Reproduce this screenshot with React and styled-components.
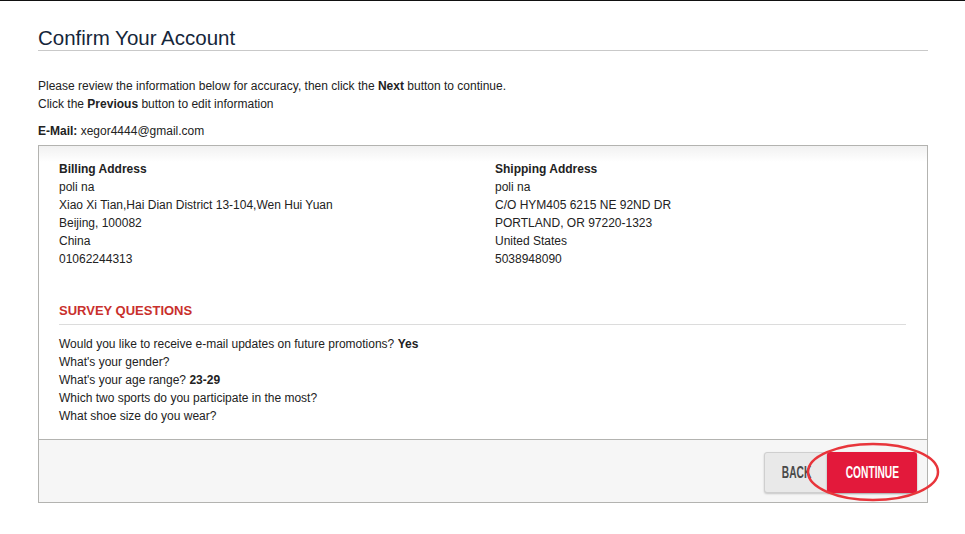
import React from "react";
import styled, { createGlobalStyle } from "styled-components";

const Global = createGlobalStyle`
  html, body { margin: 0; padding: 0; background: #fff; }
  body {
    font-family: "Liberation Sans", Arial, Helvetica, sans-serif;
    font-size: 12px;
    color: #222;
    border-top: 1px solid #111;
  }
`;

const Page = styled.div`
  width: 890px;
  padding: 26px 0 30px 38px;
`;

const Title = styled.h1`
  margin: 0;
  font-size: 20.5px;
  font-weight: normal;
  color: #15263a;
  line-height: 22px;
  padding-bottom: 1px;
  border-bottom: 1px solid #c9c9c9;
`;

const Intro = styled.p`
  margin: 26px 0 0;
  line-height: 18px;
`;

const Email = styled.p`
  margin: 9px 0 0;
  line-height: 18px;
`;

const Box = styled.div`
  margin-top: 5px;
  border: 1px solid #b3b3b0;
`;

const Body = styled.div`
  padding: 14px 20px 14px 20px;
  background: linear-gradient(#f1f1f1 0, #fff 16px);
`;

const Addresses = styled.div`
  display: grid;
  grid-template-columns: 436px 1fr;
  line-height: 18px;
`;

const Address = styled.div`
  display: flex;
  flex-direction: column;
`;

const Survey = styled.div`
  margin-top: 34px;
`;

const SurveyHead = styled.h2`
  margin: 0;
  font-size: 13px;
  line-height: 18px;
  font-weight: bold;
  color: #c9302c;
  padding-bottom: 4px;
  border-bottom: 1px solid #dcdcdc;
  margin-right: 1px;
`;

const Questions = styled.div`
  margin-top: 10px;
  line-height: 18px;
  display: flex;
  flex-direction: column;
`;

const Footer = styled.div`
  border-top: 1px solid #b3b3b0;
  background: #f6f6f6;
  height: 63px;
  display: flex;
  justify-content: flex-end;
  align-items: flex-start;
  padding: 12px 10px 0 0;
  box-sizing: border-box;
  position: relative;
`;

const Buttons = styled.div`
  display: flex;
  position: relative;
`;

const Btn = styled.button`
  height: 41px;
  border-radius: 3px;
  border: none;
  padding: 0;
  cursor: pointer;
  display: flex;
  align-items: center;
  justify-content: center;
  font-family: "Liberation Sans", Arial, sans-serif;
  font-weight: bold;
  font-size: 17px;
  ${(p) =>
    p.$primary
      ? `
    width: 90px;
    background: #e3193b;
    color: #fff;
    margin-left: -3px;
    box-shadow: 0 1px 2px rgba(0,0,0,0.35);
    position: relative;
  `
      : `
    width: 66px;
    background: #e9e9e9;
    color: #4a4a4a;
    border: 1px solid #cfcfcf;
    box-shadow: 0 1px 2px rgba(0,0,0,0.2);
  `}
`;

const BtnText = styled.span`
  display: inline-block;
  transform: scaleX(0.6);
  letter-spacing: 0;
`;

const Ring = styled.svg`
  position: absolute;
  left: 42px;
  top: -9px;
  pointer-events: none;
  overflow: visible;
`;

export default function App() {
  return (
    <>
      <Global />
      <Page>
        <Title>Confirm Your Account</Title>
        <Intro>
          Please review the information below for accuracy, then click the <b>Next</b> button to continue.
          <br />
          Click the <b>Previous</b> button to edit information
        </Intro>
        <Email>
          <b>E-Mail:</b> xegor4444@gmail.com
        </Email>
        <Box>
          <Body>
            <Addresses>
              <Address>
                <b>Billing Address</b>
                <span>poli na</span>
                <span>Xiao Xi Tian,Hai Dian District 13-104,Wen Hui Yuan</span>
                <span>Beijing, 100082</span>
                <span>China</span>
                <span>01062244313</span>
              </Address>
              <Address>
                <b>Shipping Address</b>
                <span>poli na</span>
                <span>C/O HYM405 6215 NE 92ND DR</span>
                <span>PORTLAND, OR 97220-1323</span>
                <span>United States</span>
                <span>5038948090</span>
              </Address>
            </Addresses>
            <Survey>
              <SurveyHead>SURVEY QUESTIONS</SurveyHead>
              <Questions>
                <span>
                  Would you like to receive e-mail updates on future promotions? <b>Yes</b>
                </span>
                <span>What's your gender?</span>
                <span>
                  What's your age range? <b>23-29</b>
                </span>
                <span>Which two sports do you participate in the most?</span>
                <span>What shoe size do you wear?</span>
              </Questions>
            </Survey>
          </Body>
          <Footer>
            <Buttons>
              <Btn>
                <BtnText>BACK</BtnText>
              </Btn>
              <Btn $primary>
                <BtnText>CONTINUE</BtnText>
              </Btn>
              <Ring width="134" height="60" viewBox="0 0 134 60">
                <ellipse cx="67" cy="29" rx="65" ry="28" fill="none" stroke="#e8353b" strokeWidth="2.5" />
              </Ring>
            </Buttons>
          </Footer>
        </Box>
      </Page>
    </>
  );
}
